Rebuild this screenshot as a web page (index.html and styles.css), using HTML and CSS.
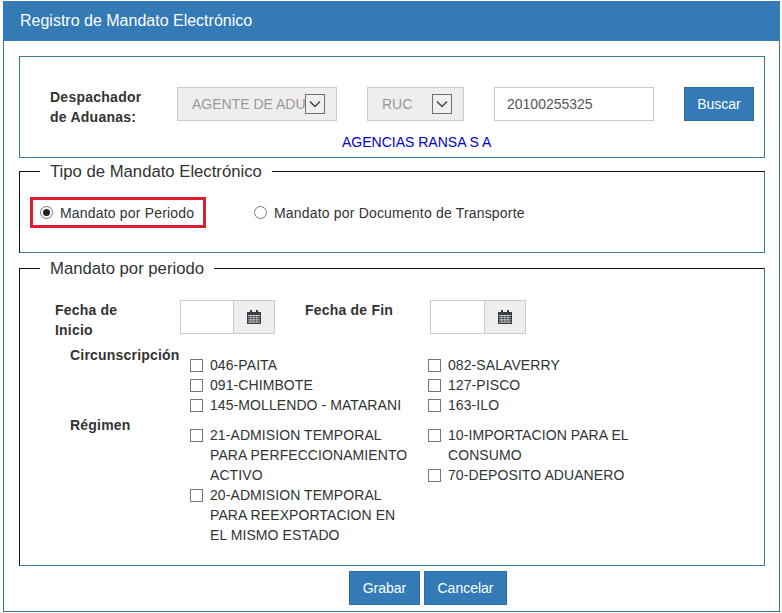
FILE: index.html
```html
<!DOCTYPE html>
<html lang="es">
<head>
  <meta charset="UTF-8">
  <title>Registro de Mandato Electrónico</title>
  <link rel="stylesheet" href="styles.css">
</head>
<body>

<div class="dialog">
  <div class="dialog-title">Registro de Mandato Electrónico</div>

  <div class="dialog-body">
    <div class="search-box">
      <div class="search-row">
        <div class="search-label">Despachador<br>de Aduanas:</div>
        <div class="fake-select select-type">
          <span class="select-text">AGENTE DE ADUANA</span>
          <span class="select-arrow"><svg width="12" height="8" viewBox="0 0 12 8"><path d="M1 1.5 L6 6.5 L11 1.5" fill="none" stroke="#444" stroke-width="1.5"/></svg></span>
        </div>
        <div class="fake-select select-doc">
          <span class="select-text">RUC</span>
          <span class="select-arrow"><svg width="12" height="8" viewBox="0 0 12 8"><path d="M1 1.5 L6 6.5 L11 1.5" fill="none" stroke="#444" stroke-width="1.5"/></svg></span>
        </div>
        <input class="text-input ruc-input" type="text" value="20100255325">
        <button class="btn btn-search" type="button">Buscar</button>
      </div>
      <div class="company-name">AGENCIAS RANSA S A</div>
    </div>

    <fieldset class="group group-type">
      <legend>Tipo de Mandato Electrónico</legend>
      <div class="radio-row">
        <label class="radio-option highlighted"><input type="radio" name="tipo" checked> Mandato por Periodo</label>
        <label class="radio-option"><input type="radio" name="tipo"> Mandato por Documento de Transporte</label>
      </div>
    </fieldset>

    <fieldset class="group group-period">
      <legend>Mandato por periodo</legend>

      <div class="date-row">
        <div class="date-label date-label-start">Fecha de Inicio</div>
        <div class="date-group">
          <input class="date-input" type="text">
          <span class="date-addon"><svg width="14" height="14" viewBox="0 0 14 14"><path fill="#3a3f47" d="M3 0h2v2h4V0h2v2h3v12H0V2h3z"/><path fill="#eee" d="M1 5h12v.8H1zM1 7.4h12v.6H1zM1 9.6h12v.6H1zM1 11.8h12v.6H1zM3.6 5.5h.6v7h-.6zM6.6 5.5h.6v7h-.6zM9.6 5.5h.6v7h-.6z"/></svg></span>
        </div>
        <div class="date-label date-label-end">Fecha de Fin</div>
        <div class="date-group date-group-end">
          <input class="date-input" type="text">
          <span class="date-addon"><svg width="14" height="14" viewBox="0 0 14 14"><path fill="#3a3f47" d="M3 0h2v2h4V0h2v2h3v12H0V2h3z"/><path fill="#eee" d="M1 5h12v.8H1zM1 7.4h12v.6H1zM1 9.6h12v.6H1zM1 11.8h12v.6H1zM3.6 5.5h.6v7h-.6zM6.6 5.5h.6v7h-.6zM9.6 5.5h.6v7h-.6z"/></svg></span>
        </div>
      </div>

      <div class="check-section section-circ">
        <div class="check-label">Circunscripción</div>
        <div class="check-col">
          <label class="check-item"><input type="checkbox"><span>046-PAITA</span></label>
          <label class="check-item"><input type="checkbox"><span>091-CHIMBOTE</span></label>
          <label class="check-item"><input type="checkbox"><span>145-MOLLENDO - MATARANI</span></label>
        </div>
        <div class="check-col">
          <label class="check-item"><input type="checkbox"><span>082-SALAVERRY</span></label>
          <label class="check-item"><input type="checkbox"><span>127-PISCO</span></label>
          <label class="check-item"><input type="checkbox"><span>163-ILO</span></label>
        </div>
      </div>

      <div class="check-section section-reg">
        <div class="check-label">Régimen</div>
        <div class="check-col">
          <label class="check-item"><input type="checkbox"><span>21-ADMISION TEMPORAL PARA PERFECCIONAMIENTO ACTIVO</span></label>
          <label class="check-item"><input type="checkbox"><span>20-ADMISION TEMPORAL PARA REEXPORTACION EN EL MISMO ESTADO</span></label>
        </div>
        <div class="check-col">
          <label class="check-item"><input type="checkbox"><span>10-IMPORTACION PARA EL CONSUMO</span></label>
          <label class="check-item"><input type="checkbox"><span>70-DEPOSITO ADUANERO</span></label>
        </div>
      </div>
    </fieldset>

    <div class="dialog-actions">
      <button class="btn btn-save" type="button">Grabar</button>
      <button class="btn btn-cancel" type="button">Cancelar</button>
    </div>
  </div>
</div>

</body>
</html>
```

FILE: styles.css
```css
* {
  box-sizing: border-box;
}
body {
  margin: 0;
  padding: 1px 2px 0 3px;
  background-color: #fff;
  font-family: "Liberation Sans", Arial, sans-serif;
  font-size: 14px;
  line-height: 20px;
  color: #333;
}
.dialog {
  height: 611px;
  border: 1px solid #35749f;
  border-top: none;
}
.dialog-title {
  height: 40px;
  margin: 0 -1px;
  padding: 10px 16px 0 17px;
  background-color: #337ab7;
  color: #fff;
  font-size: 16px;
  line-height: 20px;
}
.dialog-body {
  padding: 15px 15px 0;
}

.search-box {
  height: 102px;
  width: 746px;
  padding-top: 30px;
  border: 1px solid #3f789f;
}
.search-row {
  display: flex;
  align-items: flex-start;
  padding-left: 30px;
}
.search-label {
  width: 127px;
  font-weight: bold;
  letter-spacing: 0.25px;
}
.fake-select {
  display: flex;
  align-items: center;
  height: 34px;
  border: 1px solid #ccc;
  background-color: #eee;
  color: #999;
  padding-left: 14px;
}
.select-type {
  width: 160px;
}
.select-type .select-text {
  width: 113px;
}
.select-doc {
  width: 97px;
  margin-left: 30px;
}
.select-doc .select-text {
  width: 50px;
}
.select-text {
  overflow: hidden;
  white-space: nowrap;
}
.select-arrow {
  display: flex;
  align-items: center;
  justify-content: center;
  width: 20px;
  height: 20px;
  border: 1px solid #707070;
  background-color: #f0f0f0;
}
.text-input {
  width: 160px;
  height: 34px;
  margin-left: 30px;
  padding: 0 12px;
  border: 1px solid #ccc;
  background-color: #fff;
  font: inherit;
  color: #555;
}
.btn {
  height: 34px;
  border: 1px solid #2e6da4;
  background-color: #337ab7;
  color: #fff;
  font: inherit;
  padding: 0;
}
.btn-search {
  width: 70px;
  margin-left: 30px;
}
.company-name {
  margin-top: 11px;
  padding-left: 322px;
  line-height: 8px;
  color: #0000cd;
}

.group {
  width: 746px;
  margin: 0;
  padding: 0 10px;
  border-width: 1px;
  border-style: solid;
  border-color: #111 #3f789f #3f789f #111;
}
.group legend {
  margin-left: 10px;
  padding: 2px 10px 0;
  font-size: 16.7px;
  line-height: 22px;
  color: #333;
}
.group-type {
  height: 94px;
  margin-top: 1px;
}
.group-period {
  height: 310px;
  margin-top: 3px;
}

.radio-row {
  display: flex;
  margin-top: 14px;
  letter-spacing: 0.18px;
}
.radio-option {
  display: flex;
  align-items: center;
  gap: 7px;
  height: 31px;
}
.radio-option input {
  appearance: none;
  display: grid;
  place-items: center;
  width: 13px;
  height: 13px;
  margin: 0;
  border: 1px solid #767676;
  border-radius: 50%;
  background-color: #fff;
}
.radio-option input:checked::before {
  content: "";
  width: 7px;
  height: 7px;
  border-radius: 50%;
  background-color: #222;
}
.highlighted {
  width: 176px;
  margin-right: 48px;
  padding-left: 7px;
  border: 3px solid #dc1f2e;
}

.date-row {
  display: flex;
  margin-top: 20px;
  padding-left: 25px;
}
.date-label {
  font-weight: bold;
  letter-spacing: 0.2px;
}
.date-label-start {
  width: 125px;
  padding-right: 50px;
}
.date-label-end {
  width: 125px;
  margin-left: 30px;
}
.date-group {
  display: flex;
  height: 34px;
}
.date-input {
  width: 53px;
  height: 34px;
  border: 1px solid #ccc;
  border-right: none;
  padding: 0 6px;
}
.date-group-end .date-input {
  width: 54px;
}
.date-addon {
  display: flex;
  align-items: center;
  justify-content: center;
  width: 42px;
  border: 1px solid #ccc;
  background-color: #eee;
}

.check-section {
  display: grid;
  grid-template-columns: 120px 238px 210px;
  padding-left: 40px;
}
.section-circ {
  margin-top: 5px;
}
.check-label {
  font-weight: bold;
  letter-spacing: 0.2px;
}
.check-col {
  display: flex;
  flex-direction: column;
  padding-top: 10px;
}
.check-item {
  display: flex;
  align-items: flex-start;
  letter-spacing: 0.08px;
}
.check-item input {
  appearance: none;
  flex: none;
  width: 13px;
  height: 13px;
  margin: 4px 7px 0 0;
  border: 1px solid #767676;
  background-color: #fff;
}
.check-item span {
  width: 205px;
}

.dialog-actions {
  display: flex;
  gap: 4px;
  margin-top: 5px;
  padding-left: 330px;
}
.btn-save {
  width: 71px;
}
.btn-cancel {
  width: 83px;
}
```
